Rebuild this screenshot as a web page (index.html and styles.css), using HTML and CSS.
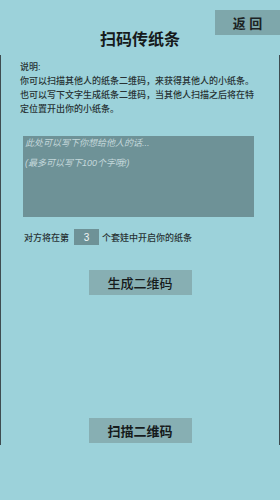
FILE: index.html
```html
<!DOCTYPE html>
<html lang="zh-CN">

<head>
    <meta charset="UTF-8">
    <meta name="viewport" content="width=device-width, initial-scale=1.0">
    <title>扫码传纸条</title>
    <link rel="stylesheet" href="styles.css">
</head>

<body>
    <div class="page">
        <!-- 顶部 -->
        <header class="top">
            <button class="back-btn">返 回</button>
            <h1 class="title">扫码传纸条</h1>
        </header>

        <!-- 内容 -->
        <main class="content">
            <div class="desc">
                说明:<br>
                你可以扫描其他人的纸条二维码，来获得其他人的小纸条。也可以写下文字生成纸条二维码，当其他人扫描之后将在特定位置开出你的小纸条。
            </div>
            <textarea class="note" placeholder="此处可以写下你想给他人的话...&#10;&#10;(最多可以写下100个字哦!)"></textarea>
            <div class="level-row">
                <span>对方将在第</span>
                <input class="level-input" type="text" value="3">
                <span>个套娃中开启你的纸条</span>
            </div>
            <button class="action-btn gen-btn">生成二维码</button>
            <button class="action-btn scan-btn">扫描二维码</button>
        </main>

        <footer class="bottom"></footer>
    </div>
</body>

</html>
```

FILE: styles.css
```css
/* 整体样式 */
body {
    margin: 0;
    font-family: "Liberation Sans", "Noto Sans CJK SC", sans-serif;
    background-color: #9cd2da;
}

.page {
    width: 280px;
    height: 500px;
    display: flex;
    flex-direction: column;
}

/* 顶部 */
.top {
    height: 55px;
    display: flex;
    flex-direction: column;
}

.back-btn {
    align-self: flex-end;
    margin-top: 10px;
    width: 65px;
    height: 25px;
    border: none;
    padding: 0;
    background-color: #7ea7ab;
    color: #1c2224;
    font-family: inherit;
    font-size: 13px;
    font-weight: bold;
}

.title {
    margin: -5px 0 0;
    text-align: center;
    font-size: 16px;
    line-height: 20px;
    color: #161a1b;
}

/* 内容 */
.content {
    height: 390px;
    box-sizing: border-box;
    border-left: 1px solid #3e4c50;
    border-right: 1px solid #3e4c50;
    display: flex;
    flex-direction: column;
}

.desc {
    width: 240px;
    margin: 5px 0 0 19px;
    font-size: 9px;
    font-weight: 500;
    line-height: 14px;
    color: #283234;
}

.note {
    width: 231px;
    height: 81px;
    box-sizing: border-box;
    margin: 20px 0 0 22px;
    padding: 2px 2px;
    border: none;
    resize: none;
    background-color: #6e9297;
    font-family: inherit;
    font-size: 9px;
    font-style: italic;
    line-height: 10px;
    outline: none;
}

.note::placeholder {
    color: #c4d8db;
}

.level-row {
    display: flex;
    align-items: center;
    margin: 12px 0 0 23px;
    font-size: 9px;
    font-weight: 500;
    color: #283234;
}

.level-input {
    width: 25px;
    height: 16px;
    box-sizing: border-box;
    margin: 0 3px 0 5px;
    padding: 0;
    border: none;
    background-color: #6e9297;
    color: #f2f6f6;
    text-align: center;
    font-family: inherit;
    font-size: 10px;
}

/* 按钮 */
.action-btn {
    align-self: center;
    width: 103px;
    height: 25px;
    padding: 0;
    border: none;
    background-color: #87afb3;
    color: #161b1c;
    font-family: inherit;
    font-size: 13px;
    font-weight: 500;
}

.gen-btn {
    margin-top: 25px;
}

.scan-btn {
    margin-top: auto;
    margin-bottom: 2px;
    font-weight: bold;
}

.bottom {
    height: 55px;
}
```
